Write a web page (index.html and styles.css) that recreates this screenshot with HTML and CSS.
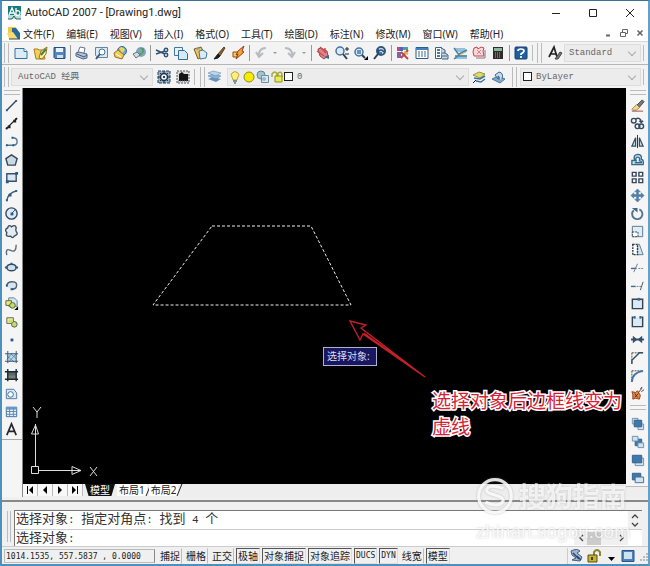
FILE: index.html
```html
<!DOCTYPE html>
<html lang="zh-CN">
<head>
<meta charset="utf-8">
<title>AutoCAD 2007 - [Drawing1.dwg]</title>
<link rel="stylesheet" href="styles.css">
</head>
<body>
<div class="window">
  <header class="titlebar">
    <svg class="icon" viewBox="0 0 16 16"><path fill="#177b7b" d="M2 1h13v13H2z"/><path fill="#b9dedb" d="M2 10h13v4H2z"/><path d="M3 10 6 3l3 7M4 8h4M10 3v7M10 6q4-1 4 2t-4 2" fill="none" stroke="#fff" stroke-width="1.3"/><path d="M2 14h4l2-3 2 3h5" stroke="#28605f" fill="none"/></svg>
    <h1>AutoCAD 2007 - [Drawing1.dwg]</h1>
    <div class="caption">
      <button aria-label="最小化"><svg viewBox="0 0 10 10"><path d="M1 5.500h8"/></svg></button>
      <button aria-label="最大化"><svg viewBox="0 0 10 10"><path d="M1.500 1.500h7v7h-7z"/></svg></button>
      <button aria-label="关闭"><svg viewBox="0 0 10 10"><path d="m1 1 8 8M9 1 1 9"/></svg></button>
    </div>
  </header>

  <nav class="menubar">
    <svg class="icon" viewBox="0 0 16 16"><path fill="#f2c83c" d="M2 2h8l2 6H2z"/><path fill="#246a9b" d="M6 3h4l4 5v6H6z"/><path fill="#f6da70" d="m1 8 6-1 5 7H3z"/><path d="M3 14h11" stroke="#284961"/></svg>
    <button>文件(F)</button><button>编辑(E)</button><button>视图(V)</button><button>插入(I)</button><button>格式(O)</button><button>工具(T)</button><button>绘图(D)</button><button>标注(N)</button><button>修改(M)</button><button>窗口(W)</button><button>帮助(H)</button>
    <div class="mdi">
      <button aria-label="最小化图形"><svg viewBox="0 0 8 8"><path d="M2 6.500h4" stroke-width="2"/></svg></button>
      <button aria-label="还原图形"><svg viewBox="0 0 8 8"><path d="M2.500 3V.500h5v4H6M.500 3.500h5v4h-5z"/></svg></button>
      <button aria-label="关闭图形"><svg viewBox="0 0 8 8"><path d="m1.500 1.500 5 5M6.500 1.500l-5 5" stroke-width="1.6"/></svg></button>
    </div>
  </nav>

  <div class="toolrow">
    <span class="grip"></span>
    <div class="tools">
      <button aria-label="新建"><svg class="icon" viewBox="0 0 16 16"><path d="M2 3.500h9l3 3v7H2z" fill="#d9ecf8" stroke="#38719a"/><path d="M11 3.500v3h3" fill="#fff" stroke="#38719a"/></svg></button>
      <button aria-label="打开"><svg class="icon" viewBox="0 0 16 16"><path d="M2 4h4l1 1h4l2 9H4z" fill="#f3cf55" stroke="#ac7c21"/><path d="m7 13 2-7 6-4-1 7-4 5z" fill="#fff1a0" stroke="#9a731f"/><path d="m9 10 5-6" stroke="#3c805d" stroke-width="2"/></svg></button>
      <button aria-label="保存"><svg class="icon" viewBox="0 0 16 16"><path d="M3 2.500h11v11H4l-1-1z" fill="#5687b9" stroke="#244f84"/><path d="M5 3h7v4H5z" fill="#e8f3fb"/><path d="M6 10h6v3H6z" fill="#cde0ef"/></svg></button>
      <span class="sep"></span>
      <button aria-label="打印"><svg class="icon" viewBox="0 0 16 16"><path d="m4 7 2-5 5 1-1 5" fill="#fff" stroke="#63768d"/><path d="m2 8 3-1 8 2v4l-4 1-7-3z" fill="#b4c2d6" stroke="#4c6485"/><path d="m3 9 7 3 3-2" fill="none" stroke="#445a78"/></svg></button>
      <button aria-label="打印预览"><svg class="icon" viewBox="0 0 16 16"><path d="M2.500 2.500h12v10h-9l-3-2z" fill="#dceaf4" stroke="#6685a3"/><circle cx="9" cy="7" r="3" fill="#fff" stroke="#3f719b"/><path d="m7 9-4 5" stroke="#39577c" stroke-width="2"/></svg></button>
      <button aria-label="发布"><svg class="icon" viewBox="0 0 16 16"><circle cx="10" cy="6" r="4.500" fill="#6bb0d2" stroke="#2e698f"/><path d="M7 3q4-2 6 2l-3 3z" fill="#f2d35c"/><path d="m2 8 4-3 6 5-2 4-7-2z" fill="#f4ce53" stroke="#997222"/><path d="m4 9 5 3" stroke="#fff"/></svg></button>
      <button aria-label="三维 DWF"><svg class="icon" viewBox="0 0 16 16"><circle cx="10" cy="7" r="5" fill="#7ca8ba"/><path d="M8 3q4 1 3 4l-3 2 1 2 4-4V3z" fill="#5d9b66"/><path d="m2 9 4-2 3 3-4 3z" fill="#d5dde2" stroke="#65737d"/></svg></button>
      <span class="sep"></span>
      <button aria-label="剪切"><svg class="icon" viewBox="0 0 16 16"><g fill="none" stroke="#31526f" stroke-width="1.500"><path d="m2 5 9 4M2 9l9-3"/><circle cx="12" cy="5" r="1.700"/><circle cx="12" cy="10" r="1.700"/></g></svg></button>
      <button aria-label="复制"><svg class="icon" viewBox="0 0 16 16"><path d="M1.500 2.500h8v8h-8z" fill="#e6f1f8" stroke="#447698"/><path d="M5.500 5.500h6l3 3v6h-9z" fill="#d5eaf7" stroke="#356c94"/></svg></button>
      <button aria-label="粘贴"><svg class="icon" viewBox="0 0 16 16"><path d="m2 4 7-2 4 8-7 4z" fill="#ecc457" stroke="#755a26"/><path d="m7 6 4-1 4 3-1 5-6 1z" fill="#d7ebf8" stroke="#477796"/><path d="m4 3 3-1 1 2-3 1z" fill="#8e9ba0"/></svg></button>
      <button aria-label="特性匹配"><svg class="icon" viewBox="0 0 16 16"><path d="m7 9 6-7 1 1-5 8z" fill="#92612d" stroke="#574023"/><path d="m3 14 4-5 2 2-2 2z" fill="#171d23" stroke="#171d23"/></svg></button>
      <button aria-label="块编辑器"><svg class="icon" viewBox="0 0 16 16"><path d="M3 7h5v5H3z" fill="#e8d850" stroke="#9b3c27"/><path d="m8 6 6-5-2 5 2 1-8 7 2-5-2 1z" fill="#f2a531" stroke="#a23420"/></svg></button>
      <span class="sep"></span>
      <button aria-label="放弃"><svg class="icon" viewBox="0 0 16 16"><path d="M13 3Q6 3 6 10M3 7l3 5 4-4" fill="none" stroke="#b8babd" stroke-width="2"/></svg></button>
      <button class="drop" aria-label="放弃列表"><svg viewBox="0 0 8 8"><path d="M2 3h4L4 5z" fill="#999"/></svg></button>
      <button aria-label="重做"><svg class="icon" viewBox="0 0 16 16"><path d="M3 3q7 0 7 7m3-3-3 5-4-4" fill="none" stroke="#b8babd" stroke-width="2"/></svg></button>
      <button class="drop" aria-label="重做列表"><svg viewBox="0 0 8 8"><path d="M2 3h4L4 5z" fill="#999"/></svg></button>
      <span class="sep"></span>
      <button aria-label="实时平移"><svg class="icon" viewBox="0 0 16 16"><path d="m3 4 3-1 6 3 1 5-4 3-4-3z" fill="#df8587" stroke="#a54147"/><path d="m5 2 6 6M2 6l7 5M10 3v5" stroke="#c85158" stroke-width="1.500"/><path d="m9 12 5-2v4z" fill="#3c668f"/></svg></button>
      <button aria-label="实时缩放"><svg class="icon" viewBox="0 0 16 16"><circle cx="6" cy="6" r="4" fill="#d8ebfa" stroke="#47739b" stroke-width="1.500"/><path d="m9 9 4 5" stroke="#283f5b" stroke-width="2"/><path d="M11 4h4m-2-2v4m-2 3h4" stroke="#1c2530"/></svg></button>
      <button aria-label="窗口缩放"><svg class="icon" viewBox="0 0 16 16"><circle cx="6" cy="7" r="4" fill="#d8ebfa" stroke="#47739b" stroke-width="1.500"/><path d="M4 5h4v4H4z" fill="#6c92b8"/><path d="m9 10 3 3" stroke="#283f5b" stroke-width="2"/><path d="M15 11v4h-4z"/></svg></button>
      <button aria-label="缩放上一个"><svg class="icon" viewBox="0 0 16 16"><circle cx="9" cy="6" r="4" fill="#d8ebfa" stroke="#31577c" stroke-width="2"/><path d="m6 9-4 5" stroke="#283f5b" stroke-width="2"/><path d="M12 7q-3-4-6 0M6 4v4h4" fill="none" stroke="#254c79" stroke-width="1.500"/></svg></button>
      <span class="sep"></span>
      <button aria-label="特性"><svg class="icon" viewBox="0 0 16 16"><path d="M2 2h3v4H2z" fill="#d33f80"/><path d="M5 2h3v4H5z" fill="#4c66bd"/><path d="M8 2h5v3H8z" fill="#4ca394"/><path d="M2 7h4v6H2z" fill="#8464a3"/><path d="m6 7 7 7M13 5l-7 8" stroke="#b94757" stroke-width="2"/><path d="m9 7 4 2" stroke="#e8b43f" stroke-width="2"/></svg></button>
      <button aria-label="设计中心"><svg class="icon" viewBox="0 0 16 16"><path d="M2 2.500h12v11H2z" fill="#fff" stroke="#285d91"/><path d="M2 3h12v2H2z" fill="#4782b6"/><path d="M4 7h2m1 0h2m1 0h2M4 9h2m1 0h2m1 0h2M4 11h2m1 0h2m1 0h2" stroke="#3d6a94"/></svg></button>
      <button aria-label="工具选项板"><svg class="icon" viewBox="0 0 16 16"><path d="M2.500 2.500h6v11h-6z" fill="#fff" stroke="#34648c"/><path d="M4 5h3M4 8h3M4 11h3" stroke="#487ba2" stroke-width="2"/><path d="m8 3 4 2v3l3 2v4H9M9 8h3m-3 3h5" fill="#c8d9e6" stroke="#3e607e"/></svg></button>
      <button aria-label="图纸集管理器"><svg class="icon" viewBox="0 0 16 16"><path d="M2 3h11l2 4H5zM5 10h10v4H2z" fill="#94c1d9"/><path d="m2 3 5 7-5 4M7 9l8-4M3 11h12" fill="none" stroke="#4d81a0" stroke-width="1.500"/><path d="m8 10 6-3" stroke="#d3b769"/></svg></button>
      <button aria-label="标记集管理器"><svg class="icon" viewBox="0 0 16 16"><path d="m3 3 3-1 1 2 3-2 3 1-1 3 1 5H3L2 7z" fill="#f8d9db" stroke="#c24752"/><path d="m6 5 4 4m0-4L6 9" stroke="#d98288"/><path d="M5 13h9V5" fill="none" stroke="#8a7480"/></svg></button>
      <button aria-label="快速计算器"><svg class="icon" viewBox="0 0 16 16"><path d="M3 2h10v12H3z" fill="#302c2b"/><path d="M4 3h8v3H4z" fill="#87b99a"/><path d="M5 8h6M5 10h6M5 12h6" stroke="#cf9685" stroke-dasharray="1 1"/></svg></button>
      <span class="sep"></span>
      <button aria-label="帮助"><svg class="icon" viewBox="0 0 16 16"><rect x="2" y="2" width="12" height="12" rx="1" fill="#205f9e" stroke="#153f70"/><path d="M5 6q0-2 3-2t3 2q0 1-3 3v1m0 1v2" fill="none" stroke="#fff" stroke-width="1.700"/></svg></button>
    </div>
    <span class="endline"></span>
    <span class="grip second"></span>
    <button class="single" aria-label="文字样式"><svg class="icon" viewBox="0 0 16 16"><path d="m2 12 5-10 3 10M4 9h6" fill="none" stroke="#222" stroke-width="1.700"/><path d="m8 14 5-7 2 1-4 6z" fill="#777" stroke="#444"/></svg></button>
    <div class="combo"><select aria-label="文字样式列表"><option>Standard</option></select></div>
    <span class="endline"></span>
  </div>

  <div class="toolrow">
    <span class="grip"></span>
    <div class="combo workspace"><select aria-label="工作空间"><option>AutoCAD 经典</option></select></div>
    <div class="tools">
      <button aria-label="工作空间设置"><svg class="icon" viewBox="0 0 16 16"><path d="M2 2h12v12H2z" fill="#9cb2c6" stroke="#273f59" stroke-dasharray="3 1"/><circle cx="8" cy="8" r="3.500" fill="#eaf2f8" stroke="#1f3348" stroke-width="1.500"/><path d="M8 2v3m0 6v3M2 8h3m6 0h3M4 4l2 2m4 4 2 2M12 4l-2 2m-4 4-2 2" stroke="#1f3348"/><circle cx="8" cy="8" r="1"/></svg></button>
      <button aria-label="我的工作空间"><svg class="icon" viewBox="0 0 16 16"><path d="M2 2h12v12H2z" fill="#ddd" stroke="#555" stroke-dasharray="2 1"/><path d="m4 5 3-2 2 2h4v7H4z" fill="#151515"/><path d="M3 12h10" stroke="#5d6b78" stroke-dasharray="1 1"/></svg></button>
    </div>
    <span class="endline"></span>
    <span class="grip layers"></span>
    <button class="single" aria-label="图层特性管理器"><svg class="icon" viewBox="0 0 16 16"><path d="m2 10 5-2 8 2-5 3z" fill="#6692bd"/><path d="m2 7 5-2 8 2-5 3z" fill="#8fb4d6" stroke="#527ca7" stroke-width=".5"/><path d="m2 4 5-2 8 2-5 3z" fill="#bed5e8" stroke="#527ca7" stroke-width=".5"/></svg></button>
    <div class="combo layer">
      <svg class="state" viewBox="0 0 14 16"><path d="M4 8Q2 6 4 4q3-3 6 0 2 2 0 4l-1 3H5z" fill="#fff078" stroke="#b7a64c"/><path d="M5 12h4m-3 2h2" stroke="#68777b" stroke-width="1.500"/></svg>
      <svg class="state" viewBox="0 0 14 16"><circle cx="7" cy="8" r="5" fill="#f7ec00" stroke="#8c8922"/></svg>
      <svg class="state" viewBox="0 0 14 16"><circle cx="5" cy="6" r="4" fill="#a1c4ce" stroke="#648790"/><path d="M5.500 6.500h7v7h-7z" fill="#d9e9f1" stroke="#718da0"/><circle cx="8" cy="10" r="2" fill="#9bb8c9"/></svg>
      <svg class="state" viewBox="0 0 14 16"><path d="M2 8V5q3-4 5 0v3m1-1V4q3-2 4 1v3" fill="none" stroke="#a8aa33" stroke-width="1.500"/><path d="M5 7h7v6H5z" fill="#eceb51" stroke="#8b8e24"/></svg>
      <span class="swatch"></span>
      <select aria-label="图层"><option>0</option></select>
    </div>
    <div class="tools">
      <button aria-label="将对象的图层置为当前"><svg class="icon" viewBox="0 0 16 16"><path d="m2 6 6-3 6 2-5 4z" fill="#e4d960" stroke="#8b9b45"/><path d="m3 9 6 1 5-3m-9 5 5 1 4-3" fill="none" stroke="#446fa0" stroke-width="1.500"/><path d="m2 14 3-3" stroke="#202020"/></svg></button>
      <button aria-label="上一个图层"><svg class="icon" viewBox="0 0 16 16"><path d="m2 10 6-3 7 3-5 4z" fill="#82a7c7" stroke="#4e79a1"/><path d="M12 10q2-6-3-7L5 6l3 4V7q2 0 1 4" fill="#c5d9e8" stroke="#38658f"/></svg></button>
    </div>
    <span class="grip layers"></span>
    <div class="combo"><span class="swatch"></span><select aria-label="颜色控制"><option>ByLayer</option></select></div>
    <span class="endline"></span>
  </div>

  <main class="workspace-area">
    <div class="side left">
      <span class="hgrip"></span>
      <button aria-label="直线"><svg class="icon" viewBox="0 0 16 16"><path d="M3 13 13 3" stroke="#354657" stroke-width="1.500"/><path d="M2 12h2v2H2zM12 2h2v2h-2z" fill="#285f94"/></svg></button>
      <button aria-label="构造线"><svg class="icon" viewBox="0 0 16 16"><path d="M2 14 14 2" stroke="#222" stroke-width="1.500"/><path d="M4 10h3v3H4zM10 4h3v3h-3zM2 12h2v2H2zM12 2h2v2h-2z" fill="#222"/></svg></button>
      <button aria-label="多段线"><svg class="icon" viewBox="0 0 16 16"><path d="M3 12h7q4 0 4-4 0-4-5-4" fill="none" stroke="#567993" stroke-width="1.500"/><path d="M2 11h2v2H2zM9 11h2v2H9zM8 3h2v2H8z" fill="#205a91"/></svg></button>
      <button aria-label="正多边形"><svg class="icon" viewBox="0 0 16 16"><path d="m8 3 6 4-2 7H4L2 7z" fill="#c9d9e6" stroke="#384855" stroke-width="1.500"/></svg></button>
      <button aria-label="矩形"><svg class="icon" viewBox="0 0 16 16"><path d="M3 4h10v8H3z" fill="#d9e8f2" stroke="#3c5268" stroke-width="1.500"/><path d="M2 11h3v3H2zM12 2h3v3h-3z" fill="#235c90"/></svg></button>
      <button aria-label="圆弧"><svg class="icon" viewBox="0 0 16 16"><path d="M3 14Q4 5 14 3" fill="none" stroke="#46596a" stroke-width="1.500"/><path d="M2 12h2v2H2zM5 6h3v3H5zM12 2h2v2h-2z" fill="#225b8f"/></svg></button>
      <button aria-label="圆"><svg class="icon" viewBox="0 0 16 16"><circle cx="8" cy="8" r="6" fill="#dceaf4" stroke="#33495d" stroke-width="1.500"/><path d="m8 8 4-4" stroke="#245a8c"/><path d="M7 7h3v3H7z" fill="#245a8c"/></svg></button>
      <button aria-label="修订云线"><svg class="icon" viewBox="0 0 16 16"><path d="M4 4q1-4 4-1 4-3 5 1-1 3 0 4 3 3-2 5-2 3-4 0-6 1-4-4-3-3 1-5z" fill="#e3ebf0" stroke="#3e5060" stroke-width="1.500"/></svg></button>
      <button aria-label="样条曲线"><svg class="icon" viewBox="0 0 16 16"><path d="M3 14q-2-8 4-5t6-6" fill="none" stroke="#606c75" stroke-width="1.500"/></svg></button>
      <button aria-label="椭圆"><svg class="icon" viewBox="0 0 16 16"><ellipse cx="8" cy="8" rx="5" ry="3.500" fill="#cfe1ee" stroke="#33495d" stroke-width="1.500"/><path d="M1 7h3v2H1zM7 3h2v2H7zM12 7h3v2h-3z" fill="#205a91"/></svg></button>
      <button aria-label="椭圆弧"><svg class="icon" viewBox="0 0 16 16"><path d="M3 9q0-5 6-5t4 6q-1 2-5 2" fill="#d9e5ed" stroke="#526271" stroke-width="1.500"/><path d="M2 7h2v2H2zM7 11h3v2H7z" fill="#205a91"/></svg></button>
      <button aria-label="插入块"><svg class="icon" viewBox="0 0 16 16"><path d="M5 2h6l3 3v6H5z" fill="#d6e6f2" stroke="#5c81a0"/><path d="M2 5h6v5H2z" fill="#f0e972" stroke="#4f6947"/><circle cx="9" cy="10" r="3" fill="#c6db66" stroke="#47653e"/><path d="M15 11v4h-4z"/></svg></button>
      <button aria-label="创建块"><svg class="icon" viewBox="0 0 16 16"><path d="M3 4h7v6H3z" fill="#f2ed9c" stroke="#546a50"/><circle cx="11" cy="11" r="3" fill="#c8d971" stroke="#465f45"/><path d="M5 6h4v3H5z" fill="#cfdd73"/></svg></button>
      <button aria-label="点"><svg class="icon" viewBox="0 0 16 16"><path d="M7 7h3v3H7z" fill="#205a91"/></svg></button>
      <button aria-label="图案填充"><svg class="icon" viewBox="0 0 16 16"><path d="M4 4h9v8H4z" fill="#c1d9ea"/><path d="m3 10 6-7M5 13l8-9M3 6l8 7M7 4l6 5" stroke="#5c8daf"/><path d="M4 1v13M13 1v13M1 4h14M1 12h14" stroke="#31536d"/></svg></button>
      <button aria-label="渐变色"><svg class="icon" viewBox="0 0 16 16"><path d="M4 4h9v8H4z" fill="#59666a"/><path d="M4 8h9v4H4z" fill="#7c806e"/><path d="M4 1v13M13 1v13M1 4h14M1 12h14" stroke="#182a38" stroke-width="1.500"/></svg></button>
      <button aria-label="面域"><svg class="icon" viewBox="0 0 16 16"><path d="M2.500 3.500h8l3 4v6h-11z" fill="#d9eaf6" stroke="#5077a2"/><circle cx="7" cy="9" r="3" fill="#f8fcff" stroke="#416c93"/></svg></button>
      <button aria-label="表格"><svg class="icon" viewBox="0 0 16 16"><path d="M2.500 3.500h11v10h-11z" fill="#e7f0f7" stroke="#386d9f"/><path d="M2 3h12v3H2z" fill="#6d9bc5"/><path d="M6 4v9m4-9v9M3 8h11M3 11h11" stroke="#5889b8"/></svg></button>
      <button aria-label="多行文字"><svg class="icon" viewBox="0 0 16 16"><path d="m3 14 5-12 5 12M5 10h6" fill="none" stroke="#26282b" stroke-width="1.800"/></svg></button>
      <span class="sidefoot"></span>
    </div>

    <section class="document">
      <div class="canvas">
        <svg class="drawing" viewBox="0 0 603 395">
          <path d="M189 138h99l40 79H130z" fill="none" stroke="#eee" stroke-dasharray="3 2"/>
          <path d="m327 233 16 4-5 3 64 49-62-43-3 6zm14 12 61 44" fill="none" stroke="#c52029" stroke-width="1.300"/>
        </svg>
        <svg class="ucs" viewBox="0 0 80 82"><g fill="none" stroke="#ddd"><path d="M8.500 66.500h7v7h-7zM12.500 66V24M16 70.500h41"/><path d="m12.500 25-4 9h7zm0 0v8M58 70.500l-9-4v8zm0 0h-8"/><path d="m10 7 4 5v6m4-11-4 5M67 67l7 9m0-9-7 9"/></g></svg>
        <div class="prompt">选择对象:</div>
        <p class="note">选择对象后边框线变为<br>虚线</p>
      </div>
      <div class="tabs">
        <button class="step" aria-label="首页"><svg viewBox="0 0 8 8"><path d="M1 0h1v8H1zM7 0v8L3 4z"/></svg></button>
        <button class="step" aria-label="上一页"><svg viewBox="0 0 8 8"><path d="M6 0v8L2 4z"/></svg></button>
        <button class="step" aria-label="下一页"><svg viewBox="0 0 8 8"><path d="M2 0v8l4-4z"/></svg></button>
        <button class="step" aria-label="末页"><svg viewBox="0 0 8 8"><path d="M1 0v8l4-4zM6 0h1v8H6z"/></svg></button>
        <button class="tab active">模型</button><button class="tab">布局1</button><button class="tab">布局2</button>
      </div>
    </section>

    <div class="side right">
      <span class="hgrip"></span>
      <button aria-label="删除"><svg class="icon" viewBox="0 0 16 16"><path d="m7 8 6-6 2 2-6 7z" fill="#777c70" stroke="#3f4545"/><path d="m2 12 5-5 3 3-3 3H3z" fill="#f3dc86" stroke="#a5805a"/><path d="M2 14h12" stroke="#984c4a"/></svg></button>
      <button aria-label="复制"><svg class="icon" viewBox="0 0 16 16"><g fill="none" stroke="#334a5f" stroke-width="1.500"><circle cx="4" cy="5" r="2.500"/><circle cx="8" cy="11" r="2.500"/><circle cx="12" cy="11" r="2.500"/><path d="M6 3q5-2 6 3m-2-1 2 2 2-2"/></g></svg></button>
      <button aria-label="镜像"><svg class="icon" viewBox="0 0 16 16"><path d="M2 13h4V4zM10 13h4L10 4z" fill="#c7dce8" stroke="#334e63" stroke-width="1.300"/><path d="M8 1v14" stroke="#202c38"/></svg></button>
      <button aria-label="偏移"><svg class="icon" viewBox="0 0 16 16"><path d="M2 13.500V9h3Q3 3 8 2.500q5 0 4 5 3 1 2 6zM5 11.500h7q1-2-2-2 1-4-2-4-3 0-1 5" fill="#d2e9f4" stroke="#356b8d" stroke-width="1.500"/></svg></button>
      <button aria-label="阵列"><svg class="icon" viewBox="0 0 16 16"><path d="M2.500 2.500h4v4h-4zM9.500 2.500h4v4h-4zM2.500 9.500h4v4h-4zM9.500 9.500h4v4h-4z" fill="#f7fafc" stroke="#374757" stroke-width="1.500"/></svg></button>
      <button aria-label="移动"><svg class="icon" viewBox="0 0 16 16"><path d="M8 1 5 4h2v3H4V5L1 8l3 3V9h3v3H5l3 3 3-3H9V9h3v2l3-3-3-3v2H9V4h2z" fill="#4c80ad" stroke="#3b6d98" stroke-width=".5"/></svg></button>
      <button aria-label="旋转"><svg class="icon" viewBox="0 0 16 16"><path d="M10 3.500a5.500 5.500 0 1 1-6 1" fill="none" stroke="#55758c" stroke-width="2"/><path d="M2 2h6v5z" fill="#3f6686"/></svg></button>
      <button aria-label="缩放"><svg class="icon" viewBox="0 0 16 16"><path d="M2.500 2.500h11v11h-11z" fill="#e0edf5" stroke="#557890"/><path d="M2.500 8.500h6v5h-6z" fill="#fff" stroke="#26394a" stroke-dasharray="2 1"/></svg></button>
      <button aria-label="拉伸"><svg class="icon" viewBox="0 0 16 16"><path d="M8 2.500h2l4 11H8z" fill="#d1e3ef" stroke="#587c9b"/><path d="M3 2.500h5v11H3z" fill="#fff" stroke="#26394a" stroke-width="1.500" stroke-dasharray="2 1"/></svg></button>
      <button aria-label="修剪"><svg class="icon" viewBox="0 0 16 16"><path d="M1 9h6" stroke="#3d6d96" stroke-width="1.500"/><path d="m4 13 4-9" stroke="#6c7b87"/><path d="M9 9h6" stroke="#6c7b87" stroke-dasharray="2 1"/></svg></button>
      <button aria-label="延伸"><svg class="icon" viewBox="0 0 16 16"><path d="M1 9h5" stroke="#3d6d96" stroke-width="1.500"/><path d="M7 9h5" stroke="#6c7b87" stroke-dasharray="2 1"/><path d="m11 13 3-9" stroke="#3f5568"/></svg></button>
      <button aria-label="打断于点"><svg class="icon" viewBox="0 0 16 16"><path d="M2.500 3.500h11v10h-11z" fill="#d9eaf4" stroke="#334353" stroke-width="1.500"/><path d="M8 2h3v3H8z" fill="#3c6c91"/></svg></button>
      <button aria-label="打断"><svg class="icon" viewBox="0 0 16 16"><path d="M4 3.500H2.500v10h11v-10H12" fill="#d9eaf4" stroke="#334353" stroke-width="1.500"/><path d="M4 2h2v3H4zM10 2h2v3h-2z" fill="#3c6c91"/></svg></button>
      <button aria-label="合并"><svg class="icon" viewBox="0 0 16 16"><path d="M1 8h14" stroke="#34506a" stroke-width="2"/><path d="M3 4v8l5-4zM13 4v8L8 8z" fill="#304f6a"/></svg></button>
      <button aria-label="倒角"><svg class="icon" viewBox="0 0 16 16"><path d="M2 3h12M2 3v11" stroke="#444" stroke-dasharray="2 1"/><path d="M2 15V11l8-8h4" fill="none" stroke="#334f68" stroke-width="1.500"/></svg></button>
      <button aria-label="圆角"><svg class="icon" viewBox="0 0 16 16"><path d="M2 3h12M2 3v11" stroke="#444" stroke-dasharray="2 1"/><path d="M2 15Q2 5 14 3" fill="none" stroke="#4476aa" stroke-width="2"/></svg></button>
      <button aria-label="分解"><svg class="icon" viewBox="0 0 16 16"><path d="m2 6 4 1 2-2 2 3 1 2-1 4-4-1-3 1V9z" fill="#df8b3b" stroke="#993b22"/><path d="m5 8 3 4m1-4-4 4" stroke="#5a2c20"/><path d="m9 7 4-5m-1 4 3-2m-4-1 2-2" stroke="#4a4640"/></svg></button>
      <span class="hgrip"></span>
      <button aria-label="前置"><svg class="icon" viewBox="0 0 16 16"><path d="M2.500 2.500h6v6h-6zM8.500 8.500h6v6h-6z" fill="#d4e2ec" stroke="#6d90ac"/><path d="M4.500 4.500h8v7h-8z" fill="#3f78ac" stroke="#315f8d"/></svg></button>
      <button aria-label="后置"><svg class="icon" viewBox="0 0 16 16"><path d="M5.500 5.500h7v7h-7z" fill="#3f78ac" stroke="#315f8d"/><path d="M2.500 2.500h6v5h-6zM8.500 9.500h6v5h-6z" fill="#d4e2ec" stroke="#6d90ac"/></svg></button>
      <button aria-label="置于对象之上"><svg class="icon" viewBox="0 0 16 16"><path d="M5.500 6.500h9v8h-9z" fill="#d4e2ec" stroke="#6d90ac"/><path d="M2.500 3.500h10v8h-10z" fill="#3f78ac" stroke="#315f8d"/></svg></button>
      <button aria-label="置于对象之下"><svg class="icon" viewBox="0 0 16 16"><path d="M2.500 3.500h9v7h-9z" fill="#3f78ac" stroke="#315f8d"/><path d="M5.500 7.500h9v6h-9z" fill="#d4e2ec" stroke="#416f98"/></svg></button>
    </div>
  </main>

  <section class="command">
    <span class="grip"></span>
    <div class="lines">
      <div class="line history"><p>选择对象<span>: </span>指定对角点<span>: </span>找到<span> 4 </span>个</p>
        <div class="vscroll"><button aria-label="向上滚动"><svg viewBox="0 0 8 6"><path d="m1 5 3-3 3 3"/></svg></button><button aria-label="向下滚动"><svg viewBox="0 0 8 6"><path d="m1 1 3 3 3-3"/></svg></button></div>
      </div>
      <div class="line"><label for="cmd">选择对象<span>:</span></label><input id="cmd" type="text">
        <div class="hscroll"><button aria-label="向左滚动"><svg viewBox="0 0 6 8"><path d="M5 1 2 4l3 3"/></svg></button><span class="thumb"></span><button aria-label="向右滚动"><svg viewBox="0 0 6 8"><path d="m1 1 3 3-3 3"/></svg></button></div>
      </div>
    </div>
    <div class="watermark" aria-hidden="true">
      <svg viewBox="0 0 36 36"><circle cx="18" cy="18" r="15.500"/><path d="M26 11q-14-5-16 1 0 3 8 5 10 3 7 7-4 5-16 0"/></svg>
      <strong>搜狗指南</strong><em>zhinan.sogou.com</em>
    </div>
  </section>

  <footer class="status">
    <output>1014.1535, 557.5837 , 0.0000</output>
    <div class="modes">
      <button>捕捉</button><button>栅格</button><button>正交</button><button class="on">极轴</button><button class="on">对象捕捉</button><button class="on">对象追踪</button><button class="on latin">DUCS</button><button class="on latin">DYN</button><button>线宽</button><button class="on">模型</button>
    </div>
    <div class="tray">
      <button aria-label="通讯中心"><svg class="icon" viewBox="0 0 16 16"><path d="M2 3q6-3 9 0l-3 2 5 4-2 4-8-1 4-2-4-3z" fill="#a4b7ce" stroke="#405b86"/><path d="m8 8 4 4M4 5l6 6" stroke="#284779" stroke-width="1.500"/></svg></button>
      <button aria-label="工具栏锁定"><svg class="icon" viewBox="0 0 16 16"><path d="M8 8V4q3-4 6 0v4" fill="none" stroke="#8b8730" stroke-width="2"/><path d="M2 7h9v7H2z" fill="#c7b528" stroke="#585017"/><path d="M6 9v3" stroke="#423b13" stroke-width="2"/></svg></button>
      <button aria-label="状态栏菜单"><svg class="icon" viewBox="0 0 16 16"><path d="M5 9h7l-3.500 4z"/></svg></button>
      <button aria-label="全屏显示"><svg class="icon" viewBox="0 0 16 16"><path d="M2 2.500h12v11H2z" fill="#4e83b5" stroke="#275587"/><path d="M4 4h8v7H4z" fill="#cce2f3"/></svg></button>
    </div>
    <svg class="resize" viewBox="0 0 8 12"><path d="M6 3h2v2H6zM3 6h2v2H3zM6 6h2v2H6zM0 9h2v2H0zM3 9h2v2H3zM6 9h2v2H6z" fill="#bbb"/></svg>
  </footer>
</div>
</body>
</html>
```
FILE: styles.css
```css
* { box-sizing: border-box; }
body { margin: 0; background: #f0f0f0; color: #222; font: 10px "Noto Sans", "Noto Sans CJK SC", sans-serif; }
button { border: 0; padding: 0; margin: 0; background: none; color: inherit; font: inherit; display: flex; align-items: center; justify-content: center; flex: none; white-space: nowrap; }
svg { display: block; flex: none; }
.icon { width: 16px; height: 16px; }
.window { min-height: 100vh; display: flex; flex-direction: column; border: 1px solid #4c91bc; border-top-color: #397299; border-left-width: 2px; border-right: 2px solid #64a0c7; border-bottom: 2px solid #4c91bc; }

.titlebar { display: flex; align-items: center; height: 24px; padding-left: 4px; background: #fff; }
h1 { margin: 0 0 0 3px; font: 400 11px/16px Roboto, "Noto Sans", sans-serif; white-space: nowrap; }
.caption { margin-left: auto; display: flex; }
.caption button { width: 37px; height: 22px; }
.caption svg { width: 10px; height: 10px; }
.caption path, .mdi path { fill: none; stroke: #222; }
.menubar { display: flex; align-items: center; gap: 12px; height: 16px; padding-left: 4px; background: #fff; }
.menubar > .icon { margin-right: -11px; }
.mdi { display: flex; margin-left: auto; }
.mdi button { width: 16px; height: 14px; }
.mdi svg { width: 8px; height: 8px; }
.mdi path { stroke: #666; }

.toolrow { display: flex; align-items: center; height: 23px; padding-right: 4px; border-top: 1px solid #d7d7d7; background: #f3f3f3; }
.toolrow + .toolrow { height: 24px; border-top-color: #b5b5b5; }
.grip { flex: none; width: 5px; height: 20px; margin: 0 2px; border: 1px solid #bbb; border-width: 0 1px; }
.grip.second { margin: 0 3px 0 4px; }
.grip.layers { margin: 0 3px 0 5px; }
.grip.layers + .single { margin-left: -4px; margin-right: 4px; }
.tools { display: flex; align-items: center; }
.tools button, .single { width: 19px; height: 20px; }
.tools .drop { width: 10px; }
.drop svg { width: 8px; height: 8px; }
.sep { width: 1px; height: 16px; margin: 0 1px 0 2px; background: #999; }
.endline { flex: none; width: 1px; height: 16px; margin-left: 2px; background: #bbb; }
.combo { position: relative; flex: 1; min-width: 0; display: flex; align-items: center; height: 18px; border: 1px solid #ddd; background: #ececec; }
.combo.workspace { flex: 0 1 142px; margin-right: 1px; }
.combo.workspace select { padding-left: 6px; }
.combo.layer { flex: 0 1 242px; }
.combo select { appearance: none; flex: 1; min-width: 0; height: 16px; padding: 0 16px 0 4px; border: 0; border-radius: 0; color: #666; font: 9px "Liberation Mono", "Noto Sans CJK SC", monospace; background: #ececec; }
.combo::after { content: ""; position: absolute; right: 5px; top: 4px; width: 5px; height: 5px; border: solid #aaa; border-width: 0 1px 1px 0; transform: rotate(45deg); pointer-events: none; }
.combo.layer .swatch { margin-left: 0; }
.state { width: 14px; height: 16px; }
.swatch { flex: none; width: 9px; height: 9px; margin-left: 2px; border: 1px solid #222; background: #fff; }

.workspace-area { flex: 1; display: flex; min-height: 0; background: #eee; }
.side { flex: none; width: 20px; display: flex; flex-direction: column; background: #f5f5f5; }
.side button { width: 18px; height: 18px; }
.left .icon, .right .icon { width: 15px; height: 15px; }
.side.right { width: 22px; padding-left: 2px; align-self: flex-start; border-bottom: 1px solid #bbb; }
.hgrip { height: 5px; margin: 2px 2px 1px; border: 1px solid #bbb; border-width: 1px 0; }
.right button + .hgrip { margin: 3px 2px 4px; }
.sidefoot { height: 1px; margin-top: 1px; background: #aaa; }
.document { flex: 1; min-width: 0; display: flex; flex-direction: column; border-left: 1px solid #888; }
.canvas { flex: 1; position: relative; overflow: hidden; background: #000; min-height: 395px; }
.drawing { position: absolute; left: 0; top: 0; width: 603px; height: 395px; }
.ucs { position: absolute; left: 0; bottom: 2px; width: 80px; height: 82px; }
.prompt { position: absolute; left: 300px; top: 259px; height: 19px; padding: 0 3px; border: 1px solid #aeb0cf; background: #19175f; color: #dedeef; font-size: 10px; line-height: 17px; width: 54px; white-space: nowrap; }
.note { position: absolute; left: 409px; top: 299px; margin: 0; color: #d91f38; font: 400 19px/26px "Noto Sans CJK SC", sans-serif; -webkit-text-stroke: 3px #fff; paint-order: stroke fill; white-space: nowrap; }
.tabs { display: flex; height: 13px; padding-bottom: 1px; }
.step { width: 15px; border-right: 1px solid #bbb; background: #f8f8f8; }
.step svg { width: 8px; height: 8px; }
.tab { position: relative; padding: 0 2px; margin-left: 2px; background: #fff; line-height: 12px; }
.tab.active { padding: 0 5px; background: #111; color: #fff; clip-path: polygon(0 0, 100% 0, 88% 100%, 12% 100%); }
.tab:not(.active)::after { content: ""; position: absolute; right: -2px; top: 0; height: 12px; border-right: 1px solid #222; transform: skewX(-22deg); }

.command { position: relative; display: flex; margin-top: 3px; padding: 8px 6px 0 3px; height: 46px; border-top: 2px solid #888; background: #f0f0f0; }
.command .grip { height: 31px; width: 4px; margin: 1px 2px; }
.lines { flex: 1; min-width: 0; margin-left: 1px; border-left: 1px solid #777; border-top: 1px solid #777; background: #fff; }
.line { display: flex; align-items: center; height: 16px; padding-left: 1px; font: 13px/14px "Noto Sans CJK SC", sans-serif; color: #333; }
.line.history { align-items: flex-start; height: 19px; border-bottom: 1px solid #ccc; }
.line p { margin: 0; line-height: 13px; white-space: pre; }
.line span:not(.thumb) { font: 11px/13px "Liberation Mono", monospace; white-space: pre; }
.line input { flex: 1; min-width: 0; height: 14px; padding: 0; border: 0; outline: 0; font: inherit; background: transparent; }
.vscroll { margin-left: auto; width: 14px; height: 18px; background: #f0f0f0; }
.vscroll button { width: 14px; height: 9px; }
.vscroll svg { width: 8px; height: 6px; }
.hscroll { display: flex; align-items: center; width: 54px; height: 14px; margin-right: 14px; background: #f0f0f0; }
.hscroll svg { width: 6px; height: 8px; }
.hscroll button { width: 13px; height: 14px; }
.hscroll button:last-child { margin-left: auto; }
.vscroll path, .hscroll path { fill: none; stroke: #444; stroke-width: 1.3; }
.thumb { width: 14px; height: 13px; background: #ccc; }
.watermark { position: absolute; right: 18px; top: -26px; display: grid; grid-template-columns: 43px auto; align-items: center; color: rgba(255, 255, 255, .75); filter: drop-shadow(0 0 1px rgba(120, 120, 120, .5)); pointer-events: none; }
.watermark svg { width: 38px; height: 38px; }
.watermark circle, .watermark path { fill: none; stroke: rgba(255, 255, 255, .85); stroke-width: 3; }
.watermark strong { font: 700 27px/40px "Noto Sans CJK SC", sans-serif; }
.watermark em { grid-column: 1 / 3; font: 400 19px/32px "Liberation Sans", sans-serif; }

.status { display: flex; align-items: center; height: 18px; padding-left: 2px; border-top: 1px solid #ccc; background: #f0f0f0; }
.status output { flex: none; width: 151px; height: 14px; padding-left: 1px; border: 1px solid #bbb; border-right-color: #888; font: 8px/13px "DejaVu Sans Mono", monospace; white-space: nowrap; }
.modes { display: flex; gap: 2px; margin-left: 3px; }
.modes button { height: 16px; padding: 0 1px; border: 1px solid transparent; border-right-color: #bbb; line-height: 14px; }
.modes .on { border-color: #555 #ddd #ddd #555; }
.modes .latin { font: 8px "DejaVu Sans Mono", monospace; }
.tray { display: flex; margin-left: auto; border-left: 1px solid #ccc; }
.tray button { width: 17px; height: 16px; }
.resize { width: 8px; height: 12px; margin-left: 4px; }
```
